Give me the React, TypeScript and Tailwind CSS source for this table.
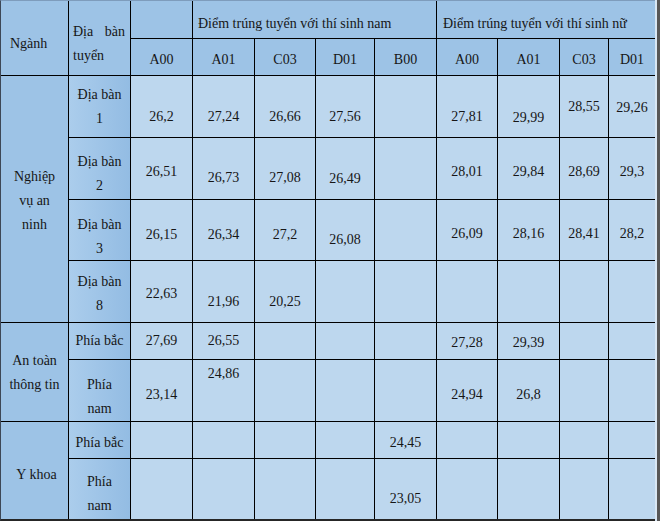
type Cell = [string, string]

const MALE = ['A00', 'A01', 'C03', 'D01', 'B00']
const FEMALE = ['A00', 'A01', 'C03', 'D01']

// each row: label under "Địa bàn tuyển", then 9 score cells [text, padding-top]
const ROWS: { place: string[]; placePt: string; cells: Cell[] }[] = [
  {
    place: ['Địa bàn', '1'],
    placePt: 'pt-[7px]',
    cells: [
      ['26,2', 'pt-[29px]'], ['27,24', 'pt-[29px]'], ['26,66', 'pt-[29px]'], ['27,56', 'pt-[29px]'], ['', ''],
      ['27,81', 'pt-[29px]'], ['29,99', 'pt-[30px]'], ['28,55', 'pt-[19px]'], ['29,26', 'pt-[20px]'],
    ],
  },
  {
    place: ['Địa bàn', '2'],
    placePt: 'pt-[12px]',
    cells: [
      ['26,51', 'pt-[22px]'], ['26,73', 'pt-[28px]'], ['27,08', 'pt-[28px]'], ['26,49', 'pt-[29px]'], ['', ''],
      ['28,01', 'pt-[22px]'], ['29,84', 'pt-[22px]'], ['28,69', 'pt-[22px]'], ['29,3', 'pt-[22px]'],
    ],
  },
  {
    place: ['Địa bàn', '3'],
    placePt: 'pt-[13px]',
    cells: [
      ['26,15', 'pt-[23px]'], ['26,34', 'pt-[23px]'], ['27,2', 'pt-[23px]'], ['26,08', 'pt-[28px]'], ['', ''],
      ['26,09', 'pt-[22px]'], ['28,16', 'pt-[22px]'], ['28,41', 'pt-[22px]'], ['28,2', 'pt-[22px]'],
    ],
  },
  {
    place: ['Địa bàn', '8'],
    placePt: 'pt-[9px]',
    cells: [
      ['22,63', 'pt-[21px]'], ['21,96', 'pt-[29px]'], ['20,25', 'pt-[29px]'], ['', ''], ['', ''],
      ['', ''], ['', ''], ['', ''], ['', ''],
    ],
  },
  {
    place: ['Phía bắc'],
    placePt: 'pt-[6px]',
    cells: [
      ['27,69', 'pt-[6px]'], ['26,55', 'pt-[6px]'], ['', ''], ['', ''], ['', ''],
      ['27,28', 'pt-[8px]'], ['29,39', 'pt-[8px]'], ['', ''], ['', ''],
    ],
  },
  {
    place: ['Phía', 'nam'],
    placePt: 'pt-[13px]',
    cells: [
      ['23,14', 'pt-[23px]'], ['24,86', 'pt-[2px]'], ['', ''], ['', ''], ['', ''],
      ['24,94', 'pt-[23px]'], ['26,8', 'pt-[23px]'], ['', ''], ['', ''],
    ],
  },
  {
    place: ['Phía bắc'],
    placePt: 'pt-[9px]',
    cells: [
      ['', ''], ['', ''], ['', ''], ['', ''], ['24,45', 'pt-[9px]'],
      ['', ''], ['', ''], ['', ''], ['', ''],
    ],
  },
  {
    place: ['Phía', 'nam'],
    placePt: 'pt-[11px]',
    cells: [
      ['', ''], ['', ''], ['', ''], ['', ''], ['23,05', 'pt-[28px]'],
      ['', ''], ['', ''], ['', ''], ['', ''],
    ],
  },
]

const ROW_START = ['row-start-3', 'row-start-4', 'row-start-5', 'row-start-6', 'row-start-7', 'row-start-8', 'row-start-9', 'row-start-10']
const COL_START = ['col-start-3', 'col-start-4', 'col-start-5', 'col-start-6', 'col-start-7', 'col-start-8', 'col-start-9', 'col-start-10', 'col-start-11']

const head = 'bg-[#9dc3e6]'
const data = 'bg-[#bdd7ee]'
const place = 'bg-linear-to-r from-[#abcdec] to-[#93bce3]'

export default function App() {
  return (
    <div className="flex w-[660px] h-[521px] bg-white font-['Liberation_Serif','Times_New_Roman',serif] text-[14px] leading-[24px] text-[#161616]">
      <div className="grid grid-cols-[67px_61px_61px_61px_60px_58px_61px_60px_61px_48px_46px] grid-rows-[37px_36px_61px_61px_60px_61px_36px_61px_36px_60px] gap-px bg-black border-l border-l-[#3d4756] border-t border-t-[#7e9cbc] border-b-2 border-b-[#262626]">
        {/* header */}
        <div className={`${head} row-span-2 col-start-1 row-start-1 pl-[9px] pt-[31px]`}>Ngành</div>
        <div className={`${head} row-span-2 col-start-2 row-start-1 pl-1 pr-[5px] pt-[19px]`}>
          <div className="flex justify-between">
            <span>Địa</span>
            <span>bàn</span>
          </div>
          <div>tuyển</div>
        </div>
        <div className={`${head} col-start-3 row-start-1`} />
        <div className={`${head} col-start-4 col-span-4 row-start-1 pl-[5px] pt-[11px] whitespace-nowrap`}>
          Điểm trúng tuyển với thí sinh nam
        </div>
        <div className={`${head} col-start-8 col-span-4 row-start-1 pl-[6px] pt-[11px] whitespace-nowrap`}>
          Điểm trúng tuyển với thí sinh nữ
        </div>
        {[...MALE, ...FEMALE].map((c, i) => (
          <div key={i} className={`${head} ${COL_START[i]} row-start-2 text-center pt-[9px]`}>
            {c}
          </div>
        ))}

        {/* Ngành column */}
        <div className={`${head} col-start-1 row-start-3 row-span-4 text-center pt-[89px]`}>
          <div>Nghiệp</div>
          <div>vụ an</div>
          <div>ninh</div>
        </div>
        <div className={`${head} col-start-1 row-start-7 row-span-2 text-center pt-[26px]`}>
          <div>An toàn</div>
          <div>thông tin</div>
        </div>
        <div className={`${head} col-start-1 row-start-9 row-span-2 text-center pl-1 pt-[41px]`}>Y khoa</div>

        {/* body */}
        {ROWS.map((r, ri) => (
          <div key={ri} className="contents">
            <div className={`${place} col-start-2 ${ROW_START[ri]} text-center ${r.placePt}`}>
              {r.place.map((t) => (
                <div key={t}>{t}</div>
              ))}
            </div>
            {r.cells.map(([t, pt], ci) => (
              <div key={ci} className={`${data} ${COL_START[ci]} ${ROW_START[ri]} text-center ${pt}`}>
                {t}
              </div>
            ))}
          </div>
        ))}
      </div>
      <div className="w-[2px] h-full bg-[#d9e7f4]" />
      <div className="w-[3px] h-full bg-[#575757]" />
    </div>
  )
}
